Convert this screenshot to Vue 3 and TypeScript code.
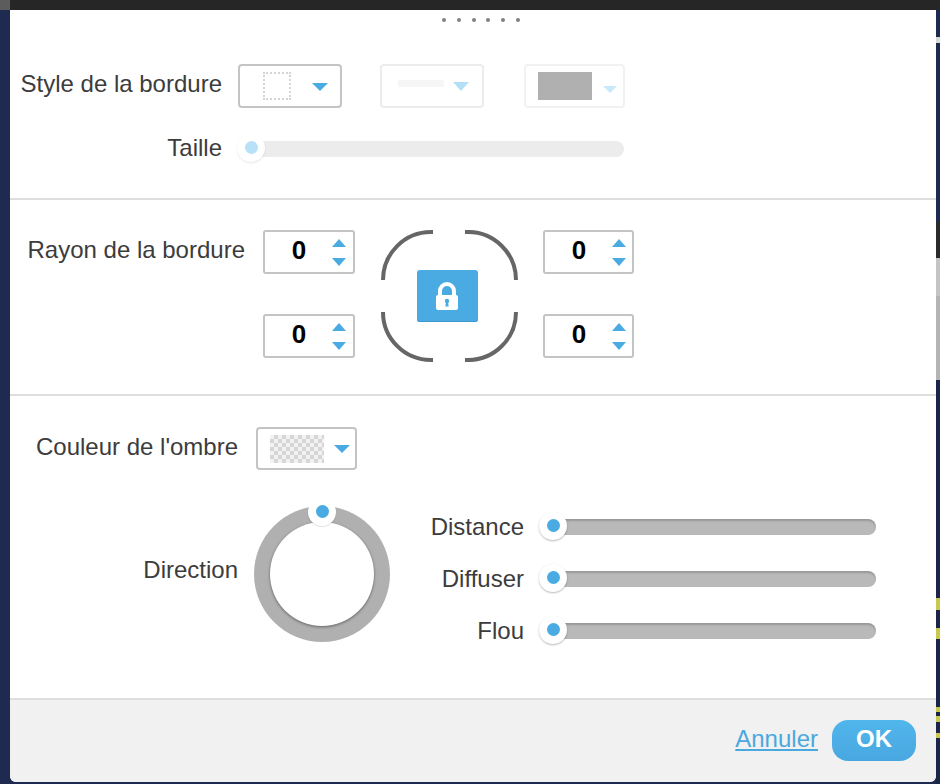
<script setup lang="ts">
const handleDots = [1, 2, 3, 4, 5, 6]
const leftSpinners = ['tl', 'bl']
const rightSpinners = ['tr', 'br']
const shadowSliders = ['Distance', 'Diffuser', 'Flou']
const edge = [
  { h: 27, c: '#1f2a50' },
  { h: 6, c: '#d8d8d8' },
  { h: 179, c: '#1f2a50' },
  { h: 36, c: '#2b2b2a' },
  { h: 38, c: '#c4c4c4' },
  { h: 84, c: '#b4b4b4' },
  { h: 218, c: '#1b2547' },
  { h: 12, c: '#c9c84e' },
  { h: 18, c: '#1b2547' },
  { h: 11, c: '#c9c84e' },
  { h: 68, c: '#1b2547' },
  { h: 5, c: '#c9c84e' },
  { h: 4, c: '#1b2547' },
  { h: 6, c: '#c9c84e' },
  { h: 11, c: '#1b2547' },
  { h: 5, c: '#c9c84e' },
  { h: 46, c: '#1b2547' }
]
</script>

<template>
  <div class="page">
    <div class="topbar"><div class="topbar-corner"></div></div>
    <div class="stage">
      <div class="gutter"></div>
      <div class="modal">
        <section class="sec sec-border">
          <div class="handle"><i v-for="d in handleDots" :key="d"></i></div>
          <div class="row row-style">
            <label class="lab lab-style lab-up2">Style de la bordure</label>
            <div class="dd dd-a">
              <span class="dotted"></span>
              <span class="tri tri-a"></span>
            </div>
            <div class="dd dd-b">
              <span class="line"></span>
              <span class="tri tri-b"></span>
            </div>
            <div class="dd dd-c">
              <span class="swatch"></span>
              <span class="tri tri-c"></span>
            </div>
          </div>
          <div class="row row-size">
            <label class="lab lab-style">Taille</label>
            <div class="track track-light"><span class="thumb thumb-light"></span></div>
          </div>
        </section>

        <section class="sec sec-radius">
          <label class="lab lab-radius">Rayon de la bordure</label>
          <div class="spin-col">
            <div v-for="s in leftSpinners" :key="s" class="spin">
              <span class="num">0</span>
              <span class="arrows"><b class="up"></b><b class="down"></b></span>
            </div>
          </div>
          <div class="corners">
            <svg class="corner-svg" width="138" height="132" viewBox="0 0 138 132">
              <path d="M3 50 A48 48 0 0 1 51 2 H53" />
              <path d="M85 2 H87 A48 48 0 0 1 136 50" />
              <path d="M3 82 A48 48 0 0 0 51 130 H53" />
              <path d="M85 130 H87 A48 48 0 0 0 136 82" />
            </svg>
            <button class="lock">
              <svg width="22" height="28" viewBox="0 0 22 28">
                <path d="M4 14V9a7 7 0 0 1 14 0v5" fill="none" stroke="#fff" stroke-width="4" />
                <rect x="0" y="13" width="22" height="15" rx="2" fill="#fff" />
                <circle cx="11" cy="19" r="2.2" fill="#4aabe3" />
                <path d="M10 20h2l.7 4.5H9.3z" fill="#4aabe3" />
              </svg>
            </button>
          </div>
          <div class="spin-col">
            <div v-for="s in rightSpinners" :key="s" class="spin spin-right">
              <span class="num">0</span>
              <span class="arrows"><b class="up"></b><b class="down"></b></span>
            </div>
          </div>
        </section>

        <section class="sec sec-shadow">
          <div class="row row-color">
            <label class="lab lab-shadow lab-up2">Couleur de l'ombre</label>
            <div class="dd dd-d">
              <span class="checker"></span>
              <span class="tri tri-a"></span>
            </div>
          </div>
          <div class="row row-dir">
            <label class="lab lab-shadow lab-dir">Direction</label>
            <div class="ring">
              <div class="ring-in"></div>
              <span class="thumb ring-thumb"></span>
            </div>
            <div class="sliders">
              <div v-for="name in shadowSliders" :key="name" class="slider-row">
                <label class="lab lab-slider">{{ name }}</label>
                <div class="track track-dark"><span class="thumb"></span></div>
              </div>
            </div>
          </div>
        </section>

        <footer class="foot">
          <a class="cancel">Annuler</a>
          <button class="ok">OK</button>
        </footer>
      </div>
      <div class="edge">
        <div v-for="(seg, i) in edge" :key="i" :style="{ height: seg.h + 'px', background: seg.c }"></div>
      </div>
    </div>
  </div>
</template>

<style scoped>
.page {
  width: 940px;
  height: 784px;
  overflow: hidden;
  background: #1f2a50;
  font-family: "Liberation Sans", Arial, sans-serif;
  color: #3c3c3c;
}
.topbar { height: 10px; background: #262626; }
.topbar-corner { width: 10px; height: 10px; background: #5c5c5c; }
.stage { display: flex; height: 774px; }
.gutter { width: 10px; flex: none; }
.edge { width: 4px; flex: none; }
.modal {
  width: 926px;
  height: 772px;
  flex: none;
  background: #fff;
  border-radius: 0 0 6px 6px;
  overflow: hidden;
  display: flex;
  flex-direction: column;
}
.sec { box-sizing: border-box; border-bottom: 2px solid #dedede; }
.sec-border { height: 190px; padding-top: 8px; }
.sec-radius { height: 196px; padding-top: 30px; display: flex; align-items: flex-start; }
.sec-shadow { height: 304px; padding-top: 31px; }

.handle { display: flex; justify-content: center; gap: 10.7px; height: 4px; padding-left: 16px; }
.handle i { width: 4px; height: 4px; border-radius: 50%; background: #808080; }

.row { display: flex; align-items: center; }
.lab { font-size: 24px; line-height: 40px; text-align: right; flex: none; white-space: nowrap; }
.lab-style { width: 212px; margin-right: 16px; }
.lab-radius { width: 235px; margin-right: 18px; }
.lab-shadow { width: 228px; margin-right: 18px; }
.lab-slider { width: 134px; margin-right: 16px; line-height: 24px; }
.lab-up2 { margin-bottom: 4px; }

.row-style { margin-top: 42px; height: 44px; }
.row-size { margin-top: 33px; height: 16px; }
.row-size .lab { margin-bottom: 2px; }
.row-color { height: 43px; }
.dd {
  box-sizing: border-box;
  height: 44px;
  border: 2px solid #c4c4c4;
  border-radius: 4px;
  display: flex;
  align-items: center;
  flex: none;
  background: #fff;
}
.dd-a { width: 104px; margin-right: 38px; padding-left: 23px; }
.dd-b { width: 104px; margin-right: 40px; padding-left: 16px; border-color: #ececec; }
.dd-c { width: 101px; padding-left: 12px; border-color: #f1f1f1; }
.dd-d { width: 101px; height: 43px; padding-left: 12px; }
.dotted { width: 28px; height: 28px; box-sizing: border-box; border: 2px dotted #d4d4d4; margin-right: 21px; }
.line { width: 46px; height: 7px; background: #f6f6f6; margin-right: 9px; margin-bottom: 6px; }
.swatch { width: 54px; height: 28px; background: #b0b0b0; margin-right: 11px; }
.checker {
  width: 54px;
  height: 28px;
  margin-right: 10px;
  background: repeating-conic-gradient(#d6d6d6 0 25%, #f2f2f2 0 50%) 0 0 / 8px 8px;
}
.tri { width: 0; height: 0; border-style: solid; border-color: transparent; border-width: 8px 8px 0; }
.tri-a { border-top-color: #4aabe3; margin-top: 1px; }
.tri-b { border-top-color: #b3e0f6; border-width: 9px 8.5px 0; margin-top: 1px; }
.tri-c { border-top-color: #c7e9f9; border-width: 7px 7px 0; margin-top: 6px; }

.track { position: relative; height: 16px; border-radius: 8px; flex: none; }
.track-light { width: 386px; background: #ececec; }
.track-dark {
  width: 336px;
  background: #b9b9b9;
  box-shadow: inset 0 2px 2px rgba(0, 0, 0, 0.18);
}
.thumb {
  position: absolute;
  left: -1px;
  top: -7px;
  width: 28px;
  height: 28px;
  border-radius: 50%;
  background: #fff;
  box-shadow: 0 1px 2px rgba(0, 0, 0, 0.28);
}
.thumb::after {
  content: "";
  position: absolute;
  left: 7.5px;
  top: 7px;
  width: 13px;
  height: 13px;
  border-radius: 50%;
  background: #4aabe3;
}
.thumb-light { box-shadow: 0 1px 2px rgba(0, 0, 0, 0.1); }
.thumb-light::after { background: #b8e1f8; }

.spin-col { display: flex; flex-direction: column; gap: 40px; flex: none; }
.spin {
  box-sizing: border-box;
  width: 92px;
  height: 44px;
  border: 2px solid #c4c4c4;
  border-radius: 3px;
  display: flex;
  align-items: center;
}
.spin-right { width: 91px; }
.num {
  width: 68px;
  text-align: center;
  font-size: 26px;
  font-weight: 700;
  color: #000;
  margin-top: -3px;
}
.arrows { display: flex; flex-direction: column; gap: 11px; margin-left: -1px; }
.arrows b { width: 0; height: 0; border-style: solid; border-color: transparent; border-width: 0 7.5px; }
.arrows .up { border-bottom: 8px solid #4aabe3; }
.arrows .down { border-top: 8px solid #4aabe3; }

.corners {
  position: relative;
  width: 138px;
  height: 132px;
  margin: 0 25px;
  flex: none;
}
.corner-svg { display: block; filter: blur(0.4px); }
.corner-svg path { fill: none; stroke: #666; stroke-width: 4; }
.lock {
  position: absolute;
  left: 37px;
  top: 40px;
  width: 61px;
  height: 52px;
  padding: 0 2px 0 0;
  border: 0;
  border-radius: 3px;
  background: #4aabe3;
  box-shadow: inset 0 -1px 0 #3f97cc;
  display: flex;
  align-items: center;
  justify-content: center;
}

.row-dir { margin-top: 36px; align-items: flex-start; }
.lab-dir { margin-right: 16px; margin-top: 44px; }
.ring {
  position: relative;
  width: 136px;
  height: 136px;
  border-radius: 50%;
  background: #b0b0b0;
  flex: none;
  display: flex;
  align-items: center;
  justify-content: center;
}
.ring-in {
  width: 104px;
  height: 104px;
  border-radius: 50%;
  background: #fff;
  box-shadow: 0 1px 3px rgba(0, 0, 0, 0.45);
}
.ring-thumb { left: 54px; top: -8px; box-shadow: 0 1px 1px rgba(0, 0, 0, 0.12); }
.sliders { display: flex; flex-direction: column; gap: 36px; margin-top: 13px; }
.slider-row { display: flex; align-items: center; height: 16px; }

.foot {
  flex: 1;
  background: #f1f1f1;
  display: flex;
  align-items: center;
  justify-content: flex-end;
  padding-right: 20px;
  padding-bottom: 2px;
  gap: 14px;
}
.cancel { font-size: 24px; color: #4aa8de; text-decoration: underline; margin-bottom: 2px; }
.ok {
  width: 84px;
  height: 41px;
  padding: 0 0 3px;
  border: 0;
  border-radius: 16px;
  background: linear-gradient(#50b6ec, #49a7e0);
  color: #fff;
  font: 700 24px "Liberation Sans", Arial, sans-serif;
}
</style>
